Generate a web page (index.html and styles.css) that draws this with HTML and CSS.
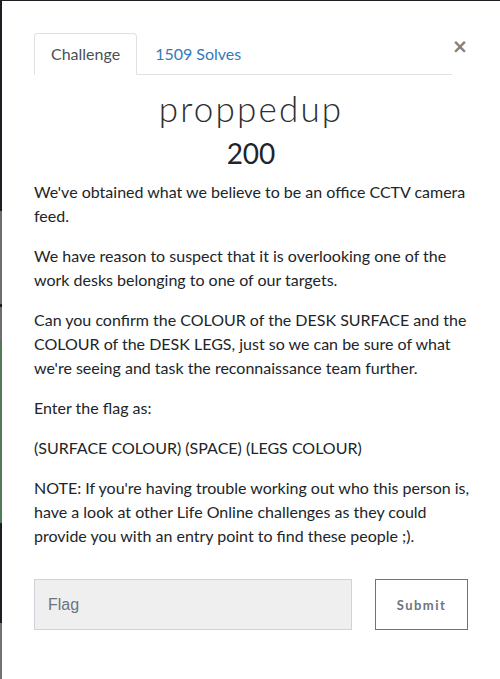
FILE: index.html
```html
<!DOCTYPE html>
<html>
<head>
<meta charset="utf-8">
<link rel="stylesheet" href="styles.css">
</head>
<body>
<div class="backdrop-top"></div>
<div class="screen">
  <div class="backdrop-left"></div>
  <div class="modal">
    <div class="head">
      <ul class="tabs">
        <li class="tab active">Challenge</li>
        <li class="tab link">1509 Solves</li>
      </ul>
      <span class="close">×</span>
    </div>
    <h2 class="title">proppedup</h2>
    <h3 class="value">200</h3>
    <div class="desc">
      <p>We've obtained what we believe to be an office CCTV camera feed.</p>
      <p>We have reason to suspect that it is overlooking one of the work desks belonging to one of our targets.</p>
      <p>Can you confirm the COLOUR of the DESK SURFACE and the COLOUR of the DESK LEGS, just so we can be sure of what we're seeing and task the reconnaissance team further.</p>
      <p>Enter the flag as:</p>
      <p>(SURFACE COLOUR) (SPACE) (LEGS COLOUR)</p>
      <p>NOTE: If you're having trouble working out who this person is, have a look at other Life Online challenges as they could provide you with an entry point to find these people ;).</p>
    </div>
    <div class="submit-row">
      <input class="flag" type="text" placeholder="Flag">
      <button class="submit">Submit</button>
    </div>
  </div>
</div>
</body>
</html>
```

FILE: styles.css
```css
html, body {
  margin: 0;
  padding: 0;
  background: #fff;
}
body {
  width: 500px;
  height: 679px;
  overflow: hidden;
  font-family: Lato, "Open Sans", sans-serif;
  color: #212529;
}
.backdrop-top {
  height: 1px;
  background: #1d2024;
}
.screen {
  display: flex;
  height: 678px;
}
.backdrop-left {
  width: 2px;
  flex: none;
  background: linear-gradient(to bottom,
    #1b1e22 0, #1b1e22 210px,
    #6e6e6e 210px, #6e6e6e 303px,
    #1b1e22 303px, #1b1e22 306px,
    #6e6e6e 306px, #6e6e6e 340px,
    #4f7b58 340px, #4f7b58 522px,
    #1b1e22 522px, #1b1e22 622px,
    #737373 622px, #737373 678px);
}
.modal {
  flex: 1;
  min-width: 0;
  box-sizing: border-box;
  width: 498px;
  background: #fff;
  padding: 32px 32px 0 32px;
}
.head {
  display: flex;
  justify-content: space-between;
  align-items: flex-start;
}
.tabs {
  list-style: none;
  margin: 0;
  padding: 0;
  display: flex;
  width: 420px;
  border-bottom: 1px solid #dee2e6;
  height: 41px;
}
.tab {
  font-size: 16px;
  line-height: 24px;
  padding: 8px 16px 8px 16px;
  height: 24px;
  border: 1px solid transparent;
  border-top-left-radius: 4px;
  border-top-right-radius: 4px;
  margin-bottom: -1px;
}
.tab.active {
  color: #495057;
  border-color: #dee2e6 #dee2e6 #fff;
  background: #fff;
}
.tab.link {
  color: #337ab7;
  padding-left: 17px;
}
.close {
  margin-top: 1px;
  font-family: "DejaVu Sans", sans-serif;
  font-weight: bold;
  font-size: 19px;
  line-height: 24px;
  color: #808080;
}
.title {
  margin: 13px 0 0 0;
  text-align: center;
  font-family: Lato, sans-serif;
  font-weight: 300;
  font-size: 35px;
  letter-spacing: 2.2px;
  line-height: 40px;
  color: #2b2e33;
}
.value {
  margin: 7px 0 0 0;
  text-align: center;
  font-weight: 400;
  font-size: 28px;
  line-height: 36px;
  color: #212529;
}
.desc {
  margin-top: 9px;
  margin-right: -8px;
}
.desc p {
  margin: 0 0 16px 0;
  font-size: 16px;
  line-height: 24px;
}
.submit-row {
  display: flex;
  justify-content: space-between;
  margin-top: 31px;
  width: 434px;
}
.flag {
  box-sizing: border-box;
  width: 318px;
  height: 51px;
  border: 1px solid #ced4da;
  background: #efefef;
  padding: 0 13px;
  font-family: "Liberation Sans", Arial, sans-serif;
  font-size: 16px;
  color: #495057;
}
.flag::placeholder {
  color: #6c757d;
}
.submit {
  box-sizing: border-box;
  width: 93px;
  height: 51px;
  border: 1px solid #6c757d;
  background: #fff;
  font-family: Lato, sans-serif;
  font-weight: bold;
  font-size: 13px;
  letter-spacing: 1.5px;
  color: #6c757d;
  padding: 0;
}
```
